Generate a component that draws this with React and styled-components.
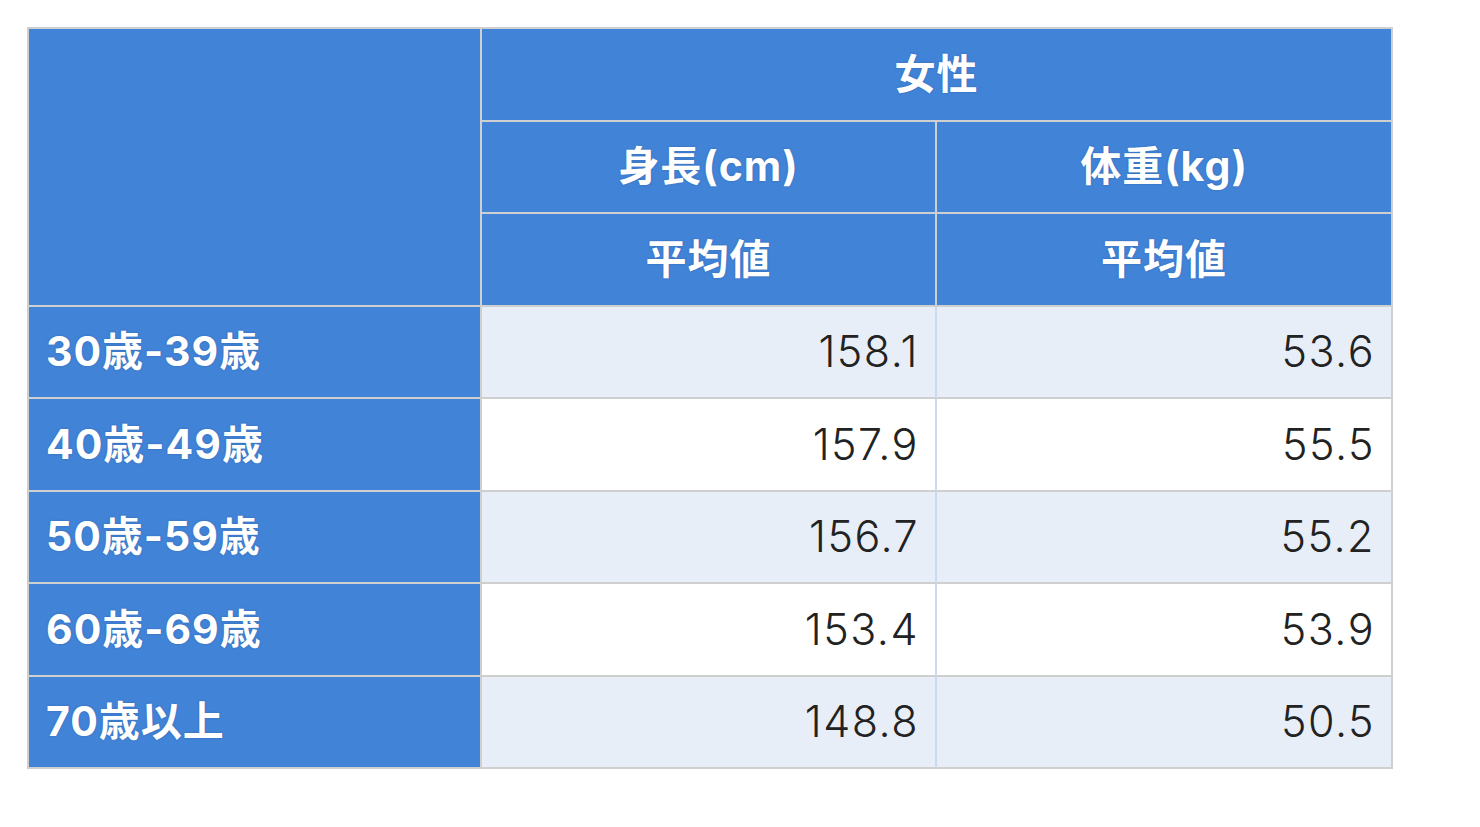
import styled, { createGlobalStyle } from "styled-components";

const GlobalStyle = createGlobalStyle`
  body {
    margin: 0;
    background: #ffffff;
    font-family: Inter, "Noto Sans CJK JP", sans-serif;
  }
`;

const Page = styled.div`
  padding: 27px 0 0 27px;
`;

const Table = styled.table`
  border-collapse: separate;
  border-spacing: 0;
  border-top: 2px solid #cfcfcf;
  border-left: 2px solid #cfcfcf;
  table-layout: fixed;
  width: 1366px;
`;

const HeadCell = styled.th`
  background: #4183d7;
  color: #ffffff;
  font-family: Inter, "Noto Sans CJK JP", sans-serif;
  font-size: 41px;
  font-weight: 700;
  line-height: 1;
  letter-spacing: 1px;
  text-align: ${({ align }) => align || "center"};
  padding: ${({ align }) => (align === "left" ? "0 0 0 17px" : "0")};
  height: 90.5px;
  border-right: 2px solid #cfcfcf;
  border-bottom: 2px solid #cfcfcf;
  text-shadow: 0 0 2px rgba(20, 50, 100, 0.35);
  vertical-align: middle;
`;

const ValueCell = styled.td`
  background: ${({ striped }) => (striped ? "#e8eef7" : "#ffffff")};
  color: #222222;
  font-family: Inter, "Noto Sans CJK JP", sans-serif;
  font-size: 43px;
  font-weight: 300;
  line-height: 1;
  letter-spacing: 1.5px;
  text-align: right;
  padding: 0 16px 0 0;
  height: 90.5px;
  border-right: 2px solid ${({ last }) => (last ? "#cfcfcf" : "#cbdaf0")};
  border-bottom: 2px solid #cfcfcf;
  vertical-align: middle;
`;

const rows = [
  { label: "30歳-39歳", height: "158.1", weight: "53.6" },
  { label: "40歳-49歳", height: "157.9", weight: "55.5" },
  { label: "50歳-59歳", height: "156.7", weight: "55.2" },
  { label: "60歳-69歳", height: "153.4", weight: "53.9" },
  { label: "70歳以上", height: "148.8", weight: "50.5" },
];

export default function App() {
  return (
    <>
      <GlobalStyle />
      <Page>
        <Table>
          <colgroup>
            <col style={{ width: "453px" }} />
            <col style={{ width: "455px" }} />
            <col style={{ width: "456px" }} />
          </colgroup>
          <thead>
            <tr>
              <HeadCell rowSpan={3}></HeadCell>
              <HeadCell colSpan={2}>女性</HeadCell>
            </tr>
            <tr>
              <HeadCell>身長(cm)</HeadCell>
              <HeadCell>体重(kg)</HeadCell>
            </tr>
            <tr>
              <HeadCell>平均値</HeadCell>
              <HeadCell>平均値</HeadCell>
            </tr>
          </thead>
          <tbody>
            {rows.map((row, i) => (
              <tr key={row.label}>
                <HeadCell align="left">{row.label}</HeadCell>
                <ValueCell striped={i % 2 === 0}>{row.height}</ValueCell>
                <ValueCell striped={i % 2 === 0} last>
                  {row.weight}
                </ValueCell>
              </tr>
            ))}
          </tbody>
        </Table>
      </Page>
    </>
  );
}
